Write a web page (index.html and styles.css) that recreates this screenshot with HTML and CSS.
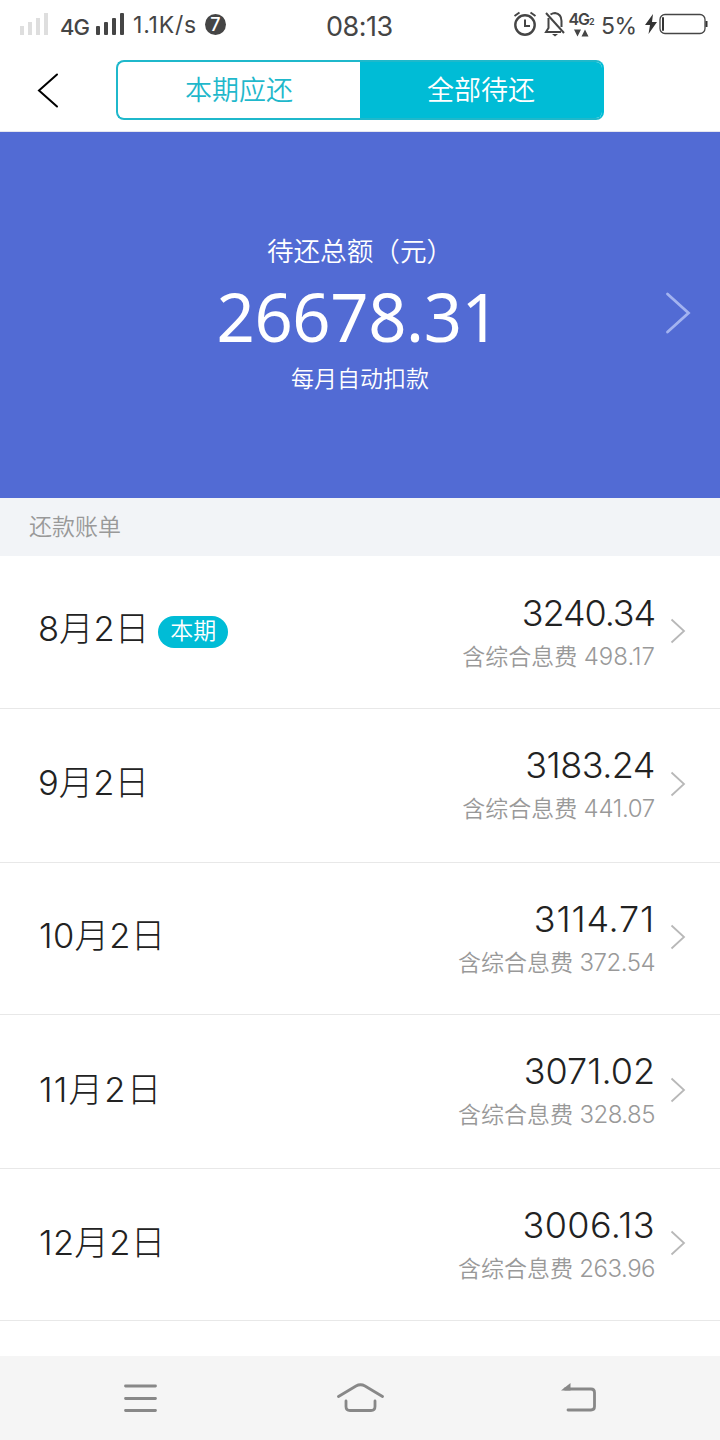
FILE: index.html
```html
<!DOCTYPE html>
<html lang="zh-CN">
<head>
    <meta charset="UTF-8">
    <meta name="viewport" content="width=device-width, initial-scale=1.0">
    <title>全部待还</title>
    <link rel="stylesheet" href="styles.css">
</head>
<body>

    <!-- 状态栏 -->
    <div class="status-bar">
        <div class="status-left">
            <svg class="signal signal-off" width="28" height="22" viewBox="0 0 28 22">
                <rect x="0" y="13" width="4" height="9"/>
                <rect x="8" y="9" width="4" height="13"/>
                <rect x="16" y="5" width="4" height="17"/>
                <rect x="24" y="0" width="4" height="22"/>
            </svg>
            <span class="network">4G</span>
            <svg class="signal" width="28" height="22" viewBox="0 0 28 22">
                <rect x="0" y="13" width="4" height="9" rx="1"/>
                <rect x="8" y="9" width="4" height="13" rx="1"/>
                <rect x="16" y="5" width="4" height="17" rx="1"/>
                <rect x="24" y="0" width="4" height="22" rx="1"/>
            </svg>
            <span class="speed">1.1K/s</span>
            <span class="count">7</span>
        </div>
        <div class="clock">08:13</div>
        <div class="status-right">
            <svg width="24" height="26" viewBox="0 0 24 26" fill="none" stroke="#454545">
                <circle cx="12" cy="14" r="9.7" stroke-width="2.4"/>
                <path d="M12 8.5V15H17" stroke-width="2"/>
                <path d="M1.5 5L6.5 1.5M22.5 5L17.5 1.5" stroke-width="2"/>
            </svg>
            <svg class="bell" width="22" height="26" viewBox="0 0 22 26" fill="none" stroke="#454545" stroke-width="2">
                <path d="M6.5 3.5Q9 2 11 2Q17.500 3 17.500 10V16M4.500 7V17L2 21H17"/>
                <path d="M2 2L20 22"/>
                <path d="M8 23H14L11 25.500Z" fill="#454545" stroke="none"/>
            </svg>
            <div class="data">
                <div class="data-type">4G<small>2</small></div>
                <svg width="15" height="8" viewBox="0 0 15 8" fill="#454545">
                    <path d="M0 0.500H7L3.500 7.500ZM7.500 7.500H14.500L11 0.500Z"/>
                </svg>
            </div>
            <span class="percent">5%</span>
            <svg class="bolt" width="12" height="20" viewBox="0 0 12 20" fill="#333">
                <path d="M8 0L0 11H5L3.500 20L12 8H7Z"/>
            </svg>
            <svg width="50" height="22" viewBox="0 0 50 22">
                <rect x="1" y="1.500" width="45" height="19" rx="5" fill="none" stroke="#454545" stroke-width="1.300"/>
                <rect x="3" y="4" width="2" height="14" rx="1" fill="#333"/>
                <path d="M47.500 8V14" stroke="#333" stroke-width="2"/>
            </svg>
        </div>
    </div>

    <!-- 顶部切换 -->
    <div class="header">
        <svg class="back" width="24" height="36" viewBox="0 0 24 36">
            <path d="M20 2.500L2 18.500L20 34.500" fill="none" stroke="#000" stroke-width="2" stroke-linecap="round"/>
        </svg>
        <div class="tabs">
            <div class="tab">本期应还</div>
            <div class="tab active">全部待还</div>
        </div>
    </div>

    <!-- 待还总额 -->
    <div class="summary">
        <div class="summary-text">
            <div class="summary-title">待还总额（元）</div>
            <div class="summary-total">26678.31</div>
            <div class="summary-note">每月自动扣款</div>
        </div>
        <svg class="summary-arrow" width="26" height="42" viewBox="0 0 26 42">
            <path d="M2.500 2L23.500 21L2.500 40" fill="none" stroke="#a3b3f0" stroke-width="2.800" stroke-linecap="round"/>
        </svg>
    </div>

    <div class="section-title">还款账单</div>

    <!-- 账单列表 -->
    <div class="bills">
        <div class="bill">
            <div class="date">8月2日</div>
            <div class="badge">本期</div>
            <div class="money">
                <div class="amount">3240.34</div>
                <div class="fee">含综合息费 <span>498.17</span></div>
            </div>
            <svg class="arrow" width="16" height="26" viewBox="0 0 16 26"><path d="M1.500 1.500L14 13L1.500 24.500"/></svg>
        </div>
        <div class="bill">
            <div class="date">9月2日</div>
            <div class="money">
                <div class="amount">3183.24</div>
                <div class="fee">含综合息费 <span>441.07</span></div>
            </div>
            <svg class="arrow" width="16" height="26" viewBox="0 0 16 26"><path d="M1.500 1.500L14 13L1.500 24.500"/></svg>
        </div>
        <div class="bill">
            <div class="date">10月2日</div>
            <div class="money">
                <div class="amount">3114.71</div>
                <div class="fee">含综合息费 <span>372.54</span></div>
            </div>
            <svg class="arrow" width="16" height="26" viewBox="0 0 16 26"><path d="M1.500 1.500L14 13L1.500 24.500"/></svg>
        </div>
        <div class="bill">
            <div class="date">11月2日</div>
            <div class="money">
                <div class="amount">3071.02</div>
                <div class="fee">含综合息费 <span>328.85</span></div>
            </div>
            <svg class="arrow" width="16" height="26" viewBox="0 0 16 26"><path d="M1.500 1.500L14 13L1.500 24.500"/></svg>
        </div>
        <div class="bill">
            <div class="date">12月2日</div>
            <div class="money">
                <div class="amount">3006.13</div>
                <div class="fee">含综合息费 <span>263.96</span></div>
            </div>
            <svg class="arrow" width="16" height="26" viewBox="0 0 16 26"><path d="M1.500 1.500L14 13L1.500 24.500"/></svg>
        </div>
    </div>

    <!-- 底部导航 -->
    <div class="nav-bar">
        <svg width="34" height="30" viewBox="0 0 34 30">
            <path d="M1.500 3H31.500M1.500 15.500H31.500M1.500 27.500H31.500"/>
        </svg>
        <svg width="48" height="30" viewBox="0 0 48 30">
            <path d="M2.500 13.500L20 3Q24.500 0.500 29 3L46.500 13.500M10 18V23.500Q10 27.500 14 27.500H35Q39 27.500 39 23.500V18"/>
        </svg>
        <svg width="36" height="30" viewBox="0 0 36 30">
            <path d="M4 6H30Q33.500 6 33.500 9.500V23.500Q33.500 27 30 27H7"/>
            <path class="fill" d="M0 7.500L9.500 0V7.500Z"/>
        </svg>
    </div>

</body>
</html>
```
FILE: styles.css
```css
/* 全局样式 */
body {
    display: flex;
    flex-direction: column;
    width: 720px;
    height: 1440px;
    margin: 0;
    background-color: #fff;
    overflow: hidden;
    font-family: Inter, "Noto Sans CJK SC", sans-serif;
    font-weight: 300;
    color: #222;
}

svg {
    display: block;
    flex-shrink: 0;
}

/* 状态栏 */
.status-bar {
    display: grid;
    grid-template-columns: 306px 1fr 207px;
    height: 48px;
    color: #454545;
    font-weight: 400;
    line-height: 48px;
}

.status-left,
.status-right {
    display: flex;
    align-items: center;
    height: 48px;
}

.status-left {
    padding-left: 20px;
}

.signal {
    fill: #454545;
}

.signal-off {
    fill: #dedede;
}

.network {
    width: 48px;
    padding: 5px 0 0 12px;
    box-sizing: border-box;
    font-size: 22px;
    font-weight: 500;
    letter-spacing: -1px;
}

.speed {
    width: 81px;
    padding: 2px 0 0 9px;
    box-sizing: border-box;
    font-size: 23px;
    letter-spacing: 0.8px;
}

.count {
    width: 21px;
    height: 21px;
    border-radius: 50%;
    background-color: #454545;
    color: #fff;
    font-size: 18px;
    font-weight: 500;
    line-height: 21px;
    text-align: center;
}

.clock {
    padding: 3px 0 0 20px;
    font-size: 27px;
    letter-spacing: -0.5px;
}

.bell {
    margin-left: 7px;
}

.data {
    width: 24px;
    margin-left: 3px;
    display: flex;
    flex-direction: column;
    align-items: center;
}

.data-type {
    font-size: 16px;
    font-weight: 600;
    line-height: 15px;
    letter-spacing: -1px;
    white-space: nowrap;
}

.data-type small {
    font-size: 9px;
}

.percent {
    width: 44px;
    padding-top: 3px;
    margin-left: 8px;
    font-size: 23px;
    letter-spacing: -0.5px;
}

.bolt {
    margin-right: 2px;
}

/* 顶部切换 */
.header {
    display: flex;
    align-items: center;
    height: 84px;
    padding-left: 37px;
    border-bottom: 1px solid #e6e6ee;
    box-sizing: border-box;
}

.tabs {
    display: flex;
    width: 488px;
    height: 60px;
    margin-left: 55px;
    border: 2px solid #1fb8cb;
    border-right-color: #00bcd6;
    border-radius: 8px;
    box-sizing: border-box;
    overflow: hidden;
}

.tab {
    flex: 1;
    color: #1fb8cb;
    font-size: 27px;
    font-weight: 350;
    line-height: 57px;
    text-align: center;
}

.tab.active {
    background-color: #00bcd6;
    color: #fff;
}

/* 待还总额 */
.summary {
    display: flex;
    align-items: center;
    height: 366px;
    padding: 0 0 4px 60px;
    box-sizing: border-box;
    background-color: #526bd4;
    color: #fff;
    font-weight: 350;
}

.summary-text {
    width: 600px;
    text-align: center;
}

.summary-title {
    font-size: 26.6px;
    line-height: 38px;
}

.summary-total {
    margin: 1px 4px 0 0;
    font-family: "Noto Sans", sans-serif;
    font-size: 67px;
    font-weight: 400;
    line-height: 90px;
    letter-spacing: -0.4px;
}

.summary-note {
    margin-top: 2px;
    font-size: 23px;
    line-height: 32px;
}

.summary-arrow {
    margin-left: 5px;
}

.section-title {
    height: 58px;
    padding-left: 29px;
    background-color: #f2f4f7;
    color: #999;
    font-size: 23px;
    font-weight: 350;
    line-height: 58px;
}

/* 账单列表 */
.bills {
    flex: 1;
}

.bill {
    display: flex;
    align-items: center;
    height: 152px;
    padding: 0 34px 0 38px;
    border-bottom: 1px solid #e8e8e8;
    box-sizing: border-box;
}

.bill:nth-child(even) {
    height: 154px;
}

.bill:first-child {
    height: 153px;
}

.date {
    margin-bottom: 6px;
    font-size: 34.5px;
    line-height: 50px;
}

.bill:nth-child(n+3) .date {
    padding-left: 1px;
    letter-spacing: 0.3px;
}

.bill:nth-child(n+4) .date {
    margin-bottom: 3px;
}

.bill:nth-child(4) .date {
    letter-spacing: 1.2px;
}

.badge {
    width: 70px;
    height: 32px;
    margin-left: 9px;
    border-radius: 16px;
    background-color: #00bcd6;
    color: #fff;
    font-size: 23px;
    font-weight: 350;
    line-height: 30px;
    text-align: center;
}

.money {
    margin: 4px 0 0 auto;
    text-align: right;
}

.bill:first-child .money {
    margin-top: 6px;
}

.bill:nth-child(even) .money {
    margin-top: 2px;
}

.amount {
    font-size: 36px;
    line-height: 44px;
}

/* 数字间距微调 */
.bill:nth-child(1) .amount {
    letter-spacing: -1.1px;
}

.bill:nth-child(2) .amount {
    letter-spacing: -0.5px;
}

.bill:nth-child(3) .amount {
    letter-spacing: 0.8px;
}

.bill:nth-child(5) .amount {
    letter-spacing: 0.4px;
}

.fee {
    color: #999;
    font-size: 23px;
    font-weight: 350;
    line-height: 44px;
}

.fee span {
    font-size: 24px;
    font-weight: 300;
}

.bill:nth-child(2) .fee span {
    letter-spacing: -0.3px;
}

.bill:nth-child(n+3) .fee span {
    letter-spacing: -0.5px;
}

.arrow {
    margin: 0 0 4px 15px;
    fill: none;
    stroke: #b8b8b8;
    stroke-width: 1.8;
}

.bill:first-child .arrow {
    margin-bottom: 2px;
}

/* 底部导航 */
.nav-bar {
    display: flex;
    align-items: center;
    justify-content: space-between;
    height: 84px;
    padding: 0 123px 0 124px;
    box-sizing: border-box;
    background-color: #f5f5f5;
}

.nav-bar path {
    fill: none;
    stroke: #888;
    stroke-width: 2.8;
    stroke-linecap: round;
}

.nav-bar .fill {
    fill: #888;
    stroke: none;
}
```
